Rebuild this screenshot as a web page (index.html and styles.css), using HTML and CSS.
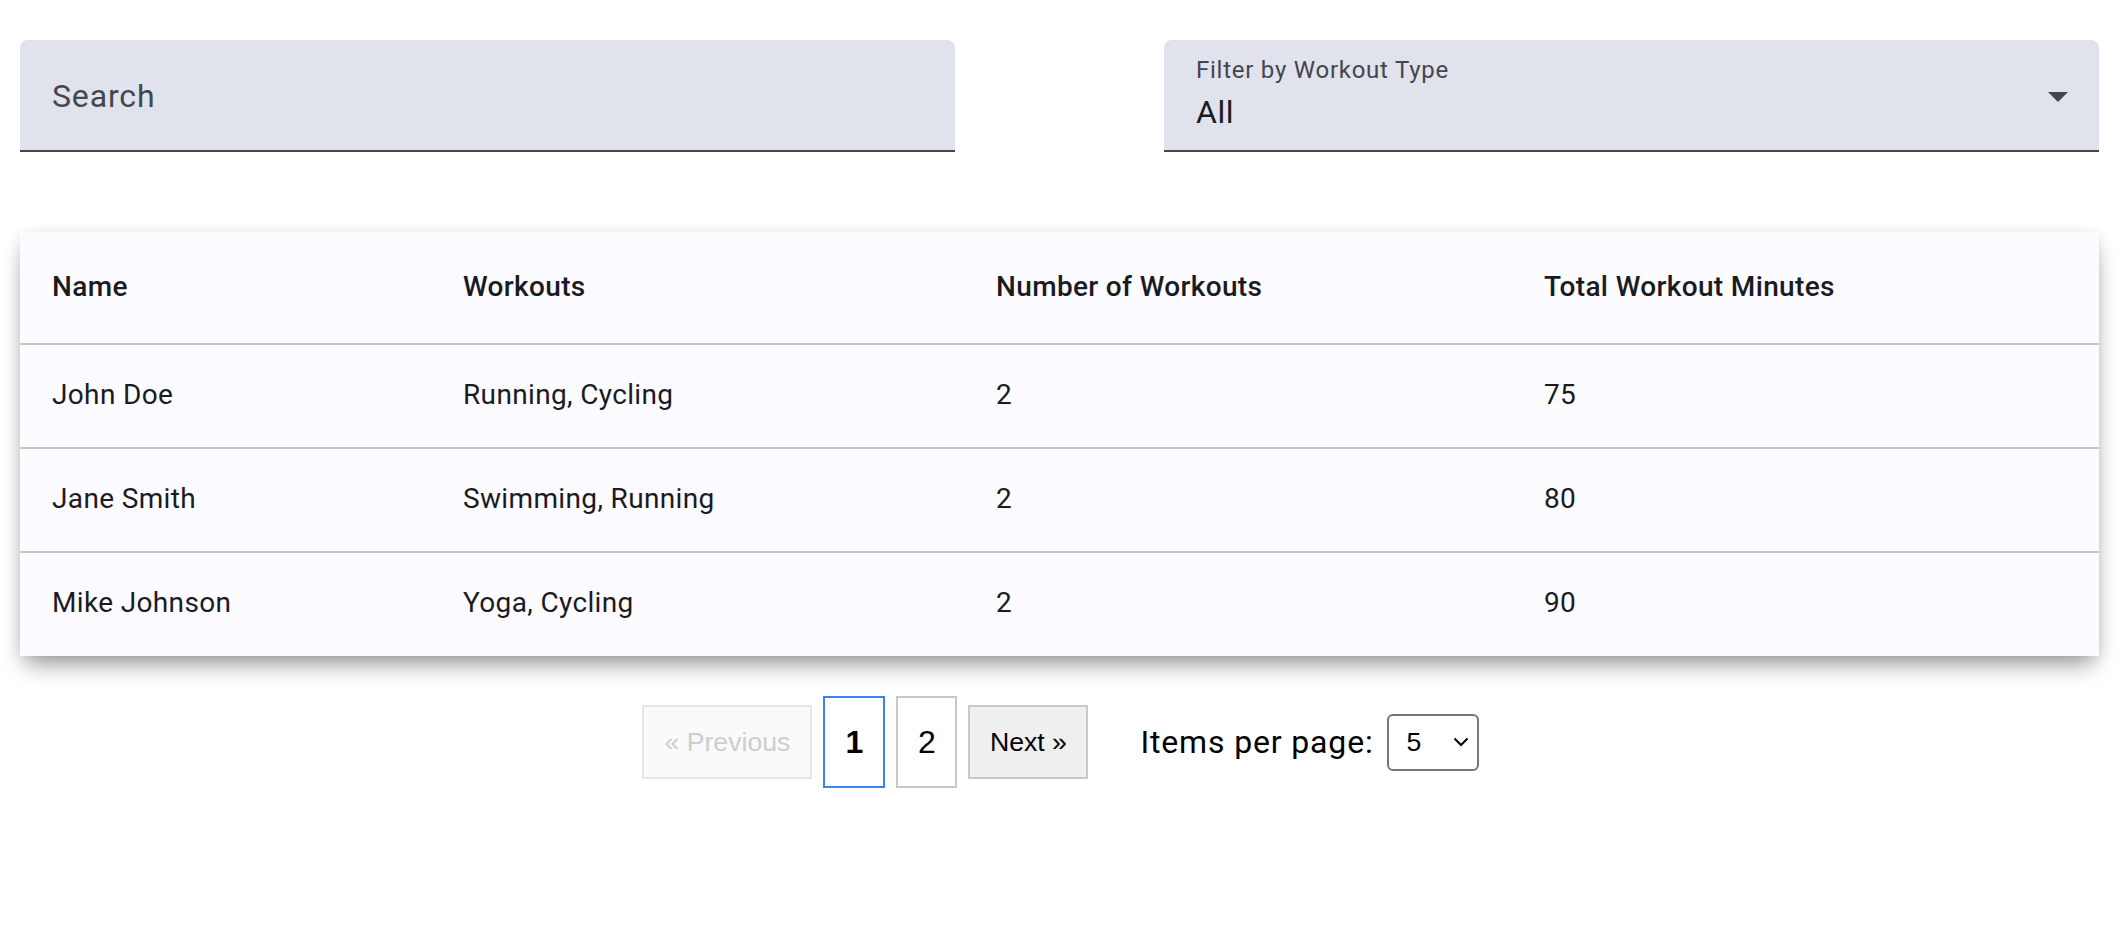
FILE: index.html
```html
<!DOCTYPE html>
<html lang="en">
<head>
<meta charset="utf-8">
<title>Workouts</title>
<link rel="stylesheet" href="styles.css">
</head>
<body>
<div class="page">
  <div class="filters">
    <div class="field field-search">
      <span class="placeholder">Search</span>
    </div>
    <div class="field field-select">
      <div class="select-text">
        <span class="label">Filter by Workout Type</span>
        <span class="value">All</span>
      </div>
      <svg class="arrow" viewBox="0 0 24 24" width="48" height="48"><path d="M7 10l5 5 5-5z"/></svg>
    </div>
  </div>

  <div class="paper">
    <table class="grid">
      <colgroup>
        <col class="c1"><col class="c2"><col class="c3"><col class="c4">
      </colgroup>
      <thead>
        <tr><th>Name</th><th>Workouts</th><th>Number of Workouts</th><th>Total Workout Minutes</th></tr>
      </thead>
      <tbody>
        <tr><td>John Doe</td><td>Running, Cycling</td><td>2</td><td>75</td></tr>
        <tr><td>Jane Smith</td><td>Swimming, Running</td><td>2</td><td>80</td></tr>
        <tr><td>Mike Johnson</td><td>Yoga, Cycling</td><td>2</td><td>90</td></tr>
      </tbody>
    </table>
  </div>

  <div class="pagination">
    <button class="btn btn-prev" disabled>« Previous</button>
    <button class="page-num active">1</button>
    <button class="page-num">2</button>
    <button class="btn btn-next">Next »</button>
    <span class="per-page-label">Items per page:</span>
    <div class="per-page">
      <span>5</span>
      <svg class="chev" viewBox="0 0 16 10" width="16" height="10"><polyline points="1.5,1.5 8,8 14.5,1.5" fill="none" stroke="#000" stroke-width="2"/></svg>
    </div>
  </div>
</div>
</body>
</html>
```

FILE: styles.css
```css
* { box-sizing: border-box; }

html, body {
  margin: 0;
  padding: 0;
  background: #ffffff;
}

body {
  font-family: Roboto, "Liberation Sans", Arial, sans-serif;
  color: #1b1b1f;
}

.page {
  width: 2079px;
  margin-left: 20px;
  padding-top: 40px;
}

.filters {
  display: flex;
  justify-content: space-between;
}

.field {
  width: 935px;
  height: 112px;
  background: #e0e2ec;
  border-radius: 8px 8px 0 0;
  border-bottom: 2px solid #44464f;
  display: flex;
  align-items: center;
  padding-left: 32px;
}

.placeholder {
  font-size: 32px;
  line-height: 32px;
  letter-spacing: 0.85px;
  color: #44464f;
  margin-top: 2px;
}

.field-select {
  justify-content: space-between;
  padding-right: 17px;
}

.select-text {
  display: flex;
  flex-direction: column;
  align-self: flex-start;
  padding-top: 18px;
}

.label {
  font-size: 24px;
  line-height: 24px;
  letter-spacing: 0.75px;
  color: #44464f;
}

.value {
  margin-top: 14px;
  font-size: 32px;
  line-height: 32px;
  letter-spacing: 0.5px;
  color: #1b1b1f;
}

.arrow {
  fill: #44464f;
  margin-top: 2px;
}

.paper {
  margin-top: 80px;
  background: #fcfbff;
  box-shadow: 0 14px 22px -6px rgba(0, 0, 0, 0.38), 0 2px 14px rgba(0, 0, 0, 0.10);
}

.grid {
  width: 2079px;
  border-collapse: collapse;
  table-layout: fixed;
}

.c1 { width: 411px; }
.c2 { width: 533px; }
.c3 { width: 548px; }
.c4 { width: 587px; }

.grid th,
.grid td {
  text-align: left;
  padding: 0 0 0 32px;
  font-size: 28px;
  letter-spacing: 0.35px;
  color: #1b1b1f;
  border-bottom: 2px solid #c6c6d0;
}

.grid th {
  height: 112px;
  font-weight: 500;
  padding-bottom: 2px;
}

.grid td {
  height: 104px;
  font-weight: 400;
  padding-bottom: 4px;
}

.grid tbody tr:last-child td {
  border-bottom: none;
}

.pagination {
  margin-top: 40px;
  display: flex;
  justify-content: center;
  align-items: center;
  padding-left: 2px;
}

.btn,
.page-num {
  font-family: "Liberation Sans", Arial, sans-serif;
  margin: 0;
  display: flex;
  align-items: center;
  justify-content: center;
  padding: 0;
}

.btn {
  height: 74px;
  font-size: 26.67px;
  border: 2px solid #c8c8c8;
  background: #efefef;
  color: #000;
}

.btn-prev {
  width: 170px;
  background: #fafafa;
  border-color: #e6e6e6;
  color: #cdcdcd;
}

.btn-next {
  width: 120px;
  margin-left: 11px;
}

.page-num {
  height: 92px;
  width: 61px;
  margin-left: 11px;
  font-size: 32px;
  background: #fff;
  border: 2px solid #c8c8c8;
  color: #000;
}

.page-num.active {
  width: 62px;
  border-color: #3b82f6;
  font-weight: 700;
}

.per-page-label {
  margin-left: 52px;
  font-size: 32px;
  letter-spacing: 0.85px;
  color: #000;
}

.per-page {
  margin-left: 13px;
  width: 92px;
  height: 57px;
  border: 2px solid #767676;
  border-radius: 6px;
  display: flex;
  align-items: center;
  justify-content: space-between;
  padding: 0 8px 0 18px;
  font-family: "Liberation Sans", Arial, sans-serif;
  font-size: 26.67px;
  color: #000;
}
```
